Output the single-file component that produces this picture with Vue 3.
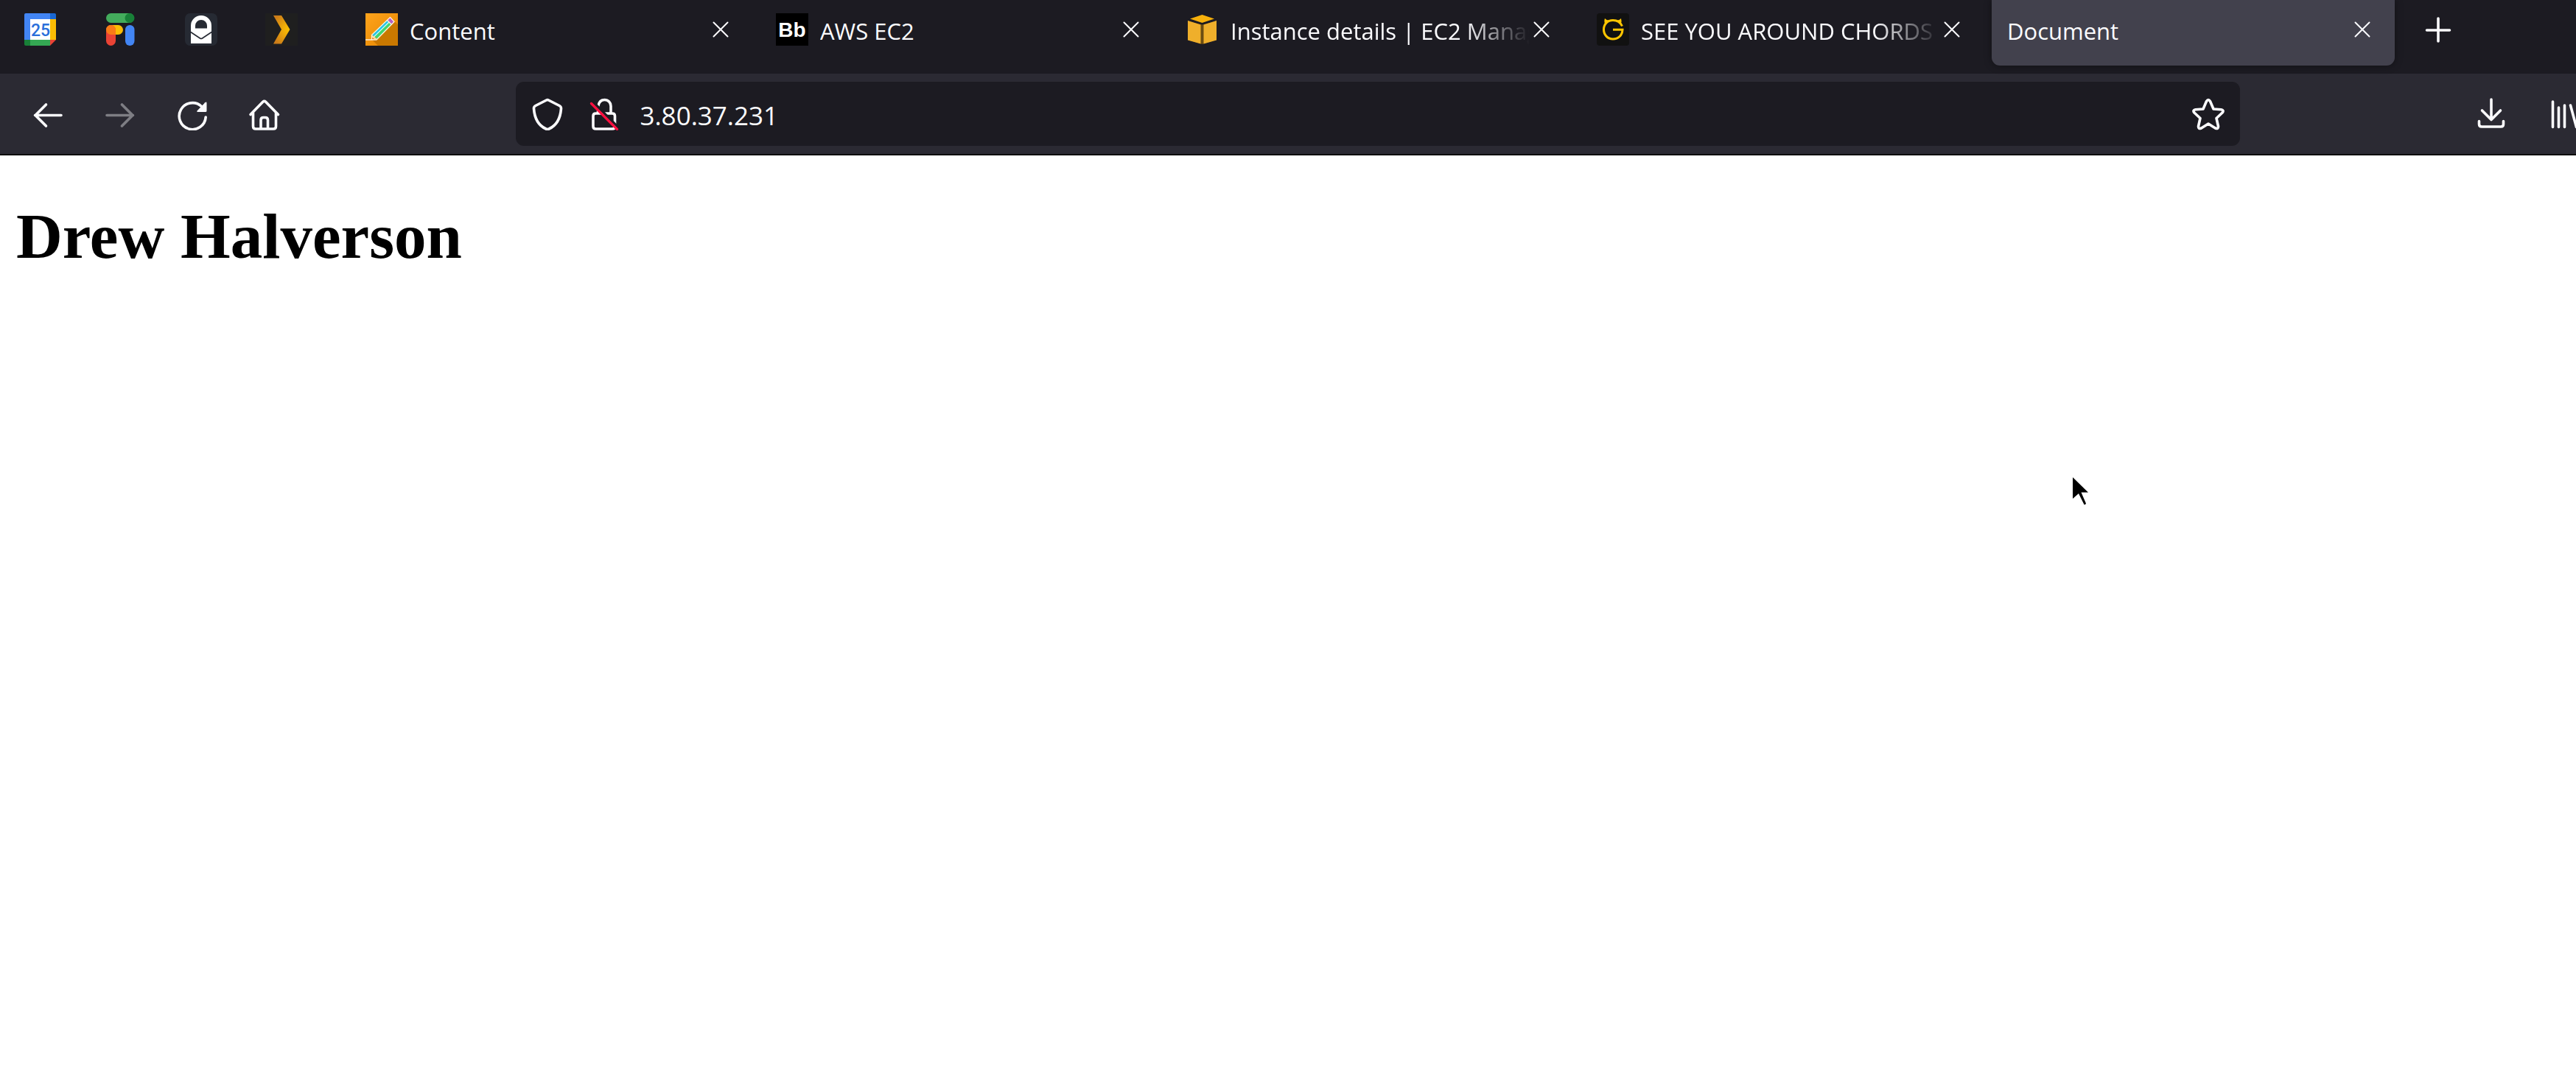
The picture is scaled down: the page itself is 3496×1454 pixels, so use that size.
<script setup>
import { ref } from 'vue'

const address = ref('3.80.37.231')
const tabs = [
  { icon: 'pencil', title: 'Content' },
  { icon: 'bb', title: 'AWS EC2' },
  { icon: 'cube', title: 'Instance details | EC2 Manag', long: true },
  { icon: 'guitar', title: 'SEE YOU AROUND CHORDS', long: true },
  { icon: '', title: 'Document', selected: true }
]
</script>

<template>
  <div class="browser">
    <header class="chrome">
      <div class="tabstrip">
        <button class="pinned" aria-label="Calendar">
          <svg class="icon" viewBox="0 0 44 44">
            <path fill="#fff" d="M8 8h27v28H8z" />
            <path fill="#4285f4" d="M2 0h33v8H8v28H0V2a2 2 0 0 1 2-2z" />
            <path fill="#1967d2" d="M35 0h6a2 2 0 0 1 2 2v6h-8z" />
            <path fill="#fbbc04" d="M35 8h8v28h-8z" />
            <path fill="#34a853" d="M8 36h27v8H8z" />
            <path fill="#188038" d="M0 36h8v8H2a2 2 0 0 1-2-2z" />
            <path fill="#ea4335" d="M35 36h8l-8 8z" />
            <text x="22" y="31" text-anchor="middle" class="cal-day">25</text>
          </svg>
        </button>
        <button class="pinned" aria-label="Fi">
          <svg class="icon" viewBox="0 0 44 44">
            <rect x="2" y="0" width="38" height="13" rx="6.5" fill="#43ac5c" />
            <circle cx="34" cy="6.5" r="6.5" fill="#188038" />
            <rect x="2" y="16" width="23" height="13" rx="6.5" fill="#fbbc04" />
            <rect x="2" y="16" width="13" height="28" rx="6.5" fill="#ea4335" />
            <path fill="#fa7b17" d="M8.500 16a6.500 6.500 0 0 1 6.500 6.500V29H8.500a6.500 6.500 0 0 1 0-13z" />
            <rect x="28" y="16" width="12.500" height="28" rx="6.200" fill="#4285f4" />
          </svg>
        </button>
        <button class="pinned" aria-label="Mail">
          <svg class="icon" viewBox="0 0 44 44">
            <rect width="44" height="44" rx="7" fill="#262a33" />
            <path fill="#fff" fill-rule="evenodd" d="M8 41V17a14 14 0 0 1 28 0v24zM14 20.500h16V17a8 8 0 0 0-16 0z" />
            <path fill="none" stroke="#262a33" stroke-width="1.600" d="M7 25l13.500 9q1.500 1 3 0L37 25" />
          </svg>
        </button>
        <button class="pinned" aria-label="Media">
          <svg class="icon" viewBox="0 0 44 44">
            <defs>
              <radialGradient id="amber" gradientUnits="userSpaceOnUse" cx="32" cy="22" r="24">
                <stop offset="0" stop-color="#f9be03" />
                <stop offset="0.300" stop-color="#f0ad08" />
                <stop offset="1" stop-color="#cc7c19" />
              </radialGradient>
            </defs>
            <rect width="44" height="44" fill="#1f1f1f" />
            <path fill="url(#amber)" d="M11 3h11l11.500 19L22 41.500H11L22 22z" />
          </svg>
        </button>

        <div class="tabs">
          <div v-for="tab in tabs" :key="tab.title" class="tab" :class="{ selected: tab.selected }">
            <button class="tab-main">
              <svg v-if="tab.icon" class="icon" viewBox="0 0 44 44" aria-hidden="true">
                <g v-if="tab.icon === 'pencil'">
                  <defs>
                    <linearGradient id="orange" x1="0" y1="0" x2="1" y2="1">
                      <stop offset="0" stop-color="#ffa41c" />
                      <stop offset="1" stop-color="#e48500" />
                    </linearGradient>
                  </defs>
                  <rect width="44" height="44" fill="url(#orange)" />
                  <path fill="#c97800" d="M39 11l5 4v29H17l-8-8z" />
                  <path fill="#ffd9a0" d="M8 29l8 6-8 1z" />
                  <path fill="#e07a10" d="M8 32l4 3-4 1z" />
                  <path fill="#25c4e8" d="M8.500 29L29 9l4 3-20.500 20z" />
                  <path fill="#3fd671" d="M12.500 32L33 12l3 3-20 20z" />
                  <path stroke="#d9fff4" stroke-width="1.200" d="M11.500 32L32.500 11.500" />
                  <path fill="#b45fc6" d="M30 9l4-3.500 5 5.500-4 4z" />
                  <path fill="none" stroke="#fff0dc" stroke-width="1.300" stroke-linejoin="round" d="M0 36h15l24-24.500L33.500 5.500 8.500 29.500V36M29.500 9.500l5.500 5.500" />
                </g>
                <g v-else-if="tab.icon === 'bb'">
                  <rect width="44" height="44" fill="#000" />
                  <text x="22" y="32" text-anchor="middle" class="bb">Bb</text>
                </g>
                <g v-else-if="tab.icon === 'cube'">
                  <path fill="#6b4c12" d="M2 10L21.500 3 41 10v26l-19.500 6L2 36z" />
                  <path fill="#1c1b22" d="M2 9.500L21.500 2 41 9.500l-2 2-17.500 4-17.500-4z" />
                  <path fill="#f8b10b" d="M21.500 2L38 7.500 21.500 13 5 7.500z" />
                  <path fill="#efaf2b" d="M2 10l17.500 5.500V41.500L2 36.500zM41 10l-17.500 5.500V41.500L41 36.500z" />
                </g>
                <g v-else>
                  <rect width="44" height="44" rx="4" fill="#111" />
                  <path fill="none" stroke="#ffc600" stroke-width="3" d="M34.500 17.500C32 12 27 9.500 22 9.500 14.500 9.500 9.500 15 9.500 22S14.500 35 22 35c7.500 0 12.500-5 13-12.700H22" />
                  <path fill="#ffc600" d="M11.500 15.500q-2-4.500-.5-8.500 2 2.500 6 2.800zM32.500 15q2-4 .5-8-2 2.500-6 2.800z" />
                </g>
              </svg>
              <span class="title" :class="{ fade: tab.long }">{{ tab.title }}</span>
            </button>
            <button class="close" aria-label="Close tab">
              <svg viewBox="0 0 32 32"><path class="thin" d="M6.500 6.500l19 19M25.500 6.500l-19 19" /></svg>
            </button>
          </div>
        </div>
        <button class="new-tab" aria-label="New tab">
          <svg class="icon" viewBox="0 0 44 44"><path class="line" d="M22 7v31M6.500 23h31" /></svg>
        </button>
      </div>

      <nav class="toolbar" aria-label="Navigation">
        <button class="tool" aria-label="Back">
          <svg class="icon" viewBox="0 0 44 44"><path class="line" d="M40 23.500H4.500M19.500 9L5 23.500 19.500 38" /></svg>
        </button>
        <button class="tool" aria-label="Forward" disabled>
          <svg class="icon" viewBox="0 0 44 44"><path class="line" d="M4 23.500h35.500M24.500 9L39 23.500 24.500 38" /></svg>
        </button>
        <button class="tool" aria-label="Reload">
          <svg class="icon" viewBox="0 0 44 44">
            <path class="line" d="M40.200 26A18 18 0 1 1 34.500 11.500" />
            <path fill="#fbfbfe" d="M41.500 7v10.500q0 1.500-1.500 1.500H29.500q-2.200 0-.8-1.700L39.300 6.200q2.200-1.500 2.200.8z" />
          </svg>
        </button>
        <button class="tool" aria-label="Home">
          <svg class="icon" viewBox="0 0 44 44">
            <path class="line" d="M3 22.500L19.800 5.200q1.900-1.800 3.800 0L40.500 22.500M6.500 19.500v19q0 3.500 3.500 3.500h24q3.500 0 3.500-3.500v-19M17 41.500V30q0-3.500 3.500-3.500h2.500q3.500 0 3.500 3.500v11.500" />
          </svg>
        </button>
        <span class="spring"></span>
        <form class="urlbar" @submit.prevent>
          <button type="button" class="bare shield" aria-label="Tracking protection">
            <svg class="icon" viewBox="0 0 44 44">
              <path class="line" d="M20.500 3q1.500-.8 3 0l14.700 7.500q2.500 1.300 2.300 4C39.500 28 34 37.500 24 42q-2 .9-4 0C10 37.500 4.500 28 3.500 14.500q-.2-2.700 2.300-4z" />
            </svg>
          </button>
          <button type="button" class="bare" aria-label="Connection not secure">
            <svg class="icon" viewBox="0 0 44 44">
              <path class="line" d="M14 10.500C15 5 18.500 2.500 22.500 2.500 27.500 2.500 31 6.500 31 11v10h2q3.500 0 3.500 3.500v14q0 3.500-3.500 3.500H10.500Q7 42 7 38.500v-14q0-3.500 3.500-3.500H31M13.500 18v3" />
              <path stroke="#1c1b22" stroke-width="3.500" d="M8 6.500L43 42" />
              <path stroke="#ff0f40" stroke-width="3.200" stroke-linecap="round" d="M4.500 7.500L39.500 42.500" />
            </svg>
          </button>
          <input v-model="address" class="address" type="text" aria-label="Address" />
          <button type="button" class="bare star" aria-label="Bookmark this page">
            <svg class="icon" viewBox="0 0 44 44">
              <path class="line" d="M19.500 4.500Q22 .8 24.500 4.500L29 15l10.500.8q4.300.8 1.500 4.200L33 27.500l2.500 11q.2 4.300-4 2.500L22 35l-9.500 6q-4.200 1.800-4-2.500l2.500-11L3 20Q.2 16.600 4.500 15.800L15 15z" />
            </svg>
          </button>
        </form>
        <span class="spring"></span>
        <button class="tool" aria-label="Downloads">
          <svg class="icon" viewBox="0 0 44 44"><path class="line" d="M22 2v27M9.500 17L22 29.500 34.500 17M5.500 31.500v4q0 3.500 3.500 3.500h26q3.500 0 3.500-3.500v-4" /></svg>
        </button>
        <button class="tool last" aria-label="Library">
          <svg class="icon" viewBox="0 0 44 44"><path class="line" d="M7.500 5v34.500M15.500 13v26.500M23.500 10v29.500M31.500 10l8 29.500" /></svg>
        </button>
      </nav>
    </header>

    <main class="page">
      <h1>Drew Halverson</h1>
    </main>

    <svg class="cursor" viewBox="0 0 22 38" aria-hidden="true"><path d="M0 0l21 20.500h-9.500L18 35.500l-1 1.500h-1.500L8 22 0 29z" /></svg>
  </div>
</template>

<style>
body {
  margin: 0;
  background: #fff;
}
</style>

<style scoped>
.browser {
  position: relative;
  overflow: hidden;
  min-height: 100vh;
  background: #fff;
}
.chrome {
  font-family: "Open Sans", "Noto Sans", sans-serif;
  color: #fbfbfe;
  border-bottom: 2px solid #0c0c0d;
}
button {
  margin: 0;
  padding: 0;
  border: 0;
  background: none;
  color: inherit;
  font: inherit;
  display: flex;
  align-items: center;
  justify-content: center;
}
.icon {
  width: 44px;
  height: 44px;
  flex: none;
  display: block;
}
.line,
.thin {
  fill: none;
  stroke: #fbfbfe;
  stroke-width: 3.6;
  stroke-linecap: round;
  stroke-linejoin: round;
}
.thin {
  stroke-width: 2;
}
.cal-day {
  font: 500 23px Roboto, sans-serif;
  fill: #2a6fdb;
}
.bb {
  font: bold 28px "Liberation Sans", sans-serif;
  fill: #fff;
}
.tabstrip {
  display: flex;
  height: 100px;
  background: #1c1b22;
}
.pinned {
  width: 109px;
  height: 80px;
  flex: none;
}
.tabs {
  display: flex;
  flex: 0 1 2785px;
  min-width: 0;
  margin-left: 34px;
}
.tab {
  flex: 1 1 0;
  min-width: 0;
  box-sizing: border-box;
  display: flex;
  height: 89px;
  margin: 0 5px;
  padding: 0 28px 9px 21px;
  border-radius: 0 0 11px 11px;
}
.tab.selected {
  background: #42414d;
  box-shadow: 0 0 11px rgba(0, 0, 0, 0.4);
}
.tab-main {
  flex: 1;
  min-width: 0;
  gap: 16px;
  justify-content: flex-start;
}
.title {
  flex: 1;
  min-width: 0;
  overflow: hidden;
  white-space: nowrap;
  text-align: left;
  padding-top: 3px;
  font-size: 31px;
  line-height: 48px;
}
.fade {
  -webkit-mask-image: linear-gradient(to left, transparent, #000 88px);
  mask-image: linear-gradient(to left, transparent, #000 88px);
}
.close {
  width: 32px;
  flex: none;
}
.close svg {
  width: 32px;
  height: 32px;
}
.new-tab {
  width: 108px;
  height: 80px;
  flex: none;
}
.toolbar {
  display: flex;
  align-items: center;
  height: 109px;
  padding-left: 16px;
  background: #2b2a33;
  overflow: hidden;
}
.tool {
  width: 98px;
  height: 88px;
  flex: none;
}
.tool:disabled {
  opacity: 0.4;
}
.last {
  margin-right: -32px;
}
.spring {
  flex: 1;
}
.urlbar {
  flex: 8;
  min-width: 0;
  display: flex;
  align-items: center;
  height: 87px;
  border-radius: 11px;
  background: #1c1b22;
}
.bare {
  flex: none;
}
.bare + .bare {
  margin-left: 33px;
}
.shield {
  margin-left: 21px;
}
.star {
  margin-right: 21px;
}
.address {
  flex: 1;
  min-width: 0;
  margin-left: 26px;
  padding: 5px 0 0;
  border: 0;
  outline: 0;
  background: none;
  color: inherit;
  font-family: inherit;
  font-size: 35px;
  line-height: 56px;
}
.page {
  padding: 0 22px;
}
h1 {
  margin: 59px 0;
  font: bold 87px "Liberation Serif", serif;
  color: #000;
}
.cursor {
  position: absolute;
  left: 2813px;
  top: 648px;
  width: 22px;
  height: 38px;
}
</style>
